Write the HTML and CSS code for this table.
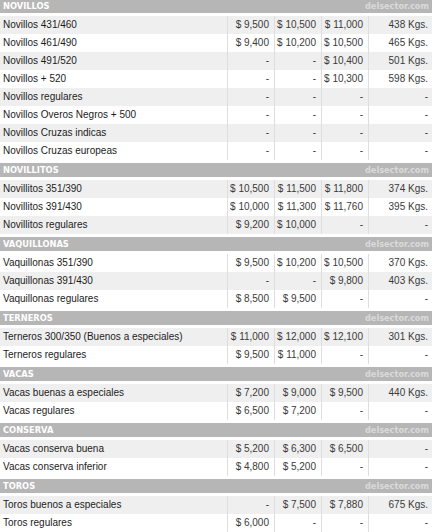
FILE: index.html
```html
<!DOCTYPE html>
<html>
<head>
<meta charset="utf-8">
<link rel="stylesheet" href="styles.css">
</head>
<body>
<div class="board">
  <div class="sec"><span class="sec-name">NOVILLOS</span><span class="brand">delsector.com</span></div>
  <div class="row g"><span class="lbl">Novillos 431/460</span><span class="n">$ 9,500</span><span class="n">$ 10,500</span><span class="n">$ 11,000</span><span class="n k">438 Kgs.</span></div>
  <div class="row"><span class="lbl">Novillos 461/490</span><span class="n">$ 9,400</span><span class="n">$ 10,200</span><span class="n">$ 10,500</span><span class="n k">465 Kgs.</span></div>
  <div class="row g"><span class="lbl">Novillos 491/520</span><span class="n">-</span><span class="n">-</span><span class="n">$ 10,400</span><span class="n k">501 Kgs.</span></div>
  <div class="row"><span class="lbl">Novillos + 520</span><span class="n">-</span><span class="n">-</span><span class="n">$ 10,300</span><span class="n k">598 Kgs.</span></div>
  <div class="row g"><span class="lbl">Novillos regulares</span><span class="n">-</span><span class="n">-</span><span class="n">-</span><span class="n k">-</span></div>
  <div class="row"><span class="lbl">Novillos Overos Negros + 500</span><span class="n">-</span><span class="n">-</span><span class="n">-</span><span class="n k">-</span></div>
  <div class="row g"><span class="lbl">Novillos Cruzas indicas</span><span class="n">-</span><span class="n">-</span><span class="n">-</span><span class="n k">-</span></div>
  <div class="row"><span class="lbl">Novillos Cruzas europeas</span><span class="n">-</span><span class="n">-</span><span class="n">-</span><span class="n k">-</span></div>

  <div class="sec"><span class="sec-name">NOVILLITOS</span><span class="brand">delsector.com</span></div>
  <div class="row g"><span class="lbl">Novillitos 351/390</span><span class="n">$ 10,500</span><span class="n">$ 11,500</span><span class="n">$ 11,800</span><span class="n k">374 Kgs.</span></div>
  <div class="row"><span class="lbl">Novillitos 391/430</span><span class="n">$ 10,000</span><span class="n">$ 11,300</span><span class="n">$ 11,760</span><span class="n k">395 Kgs.</span></div>
  <div class="row g"><span class="lbl">Novillitos regulares</span><span class="n">$ 9,200</span><span class="n">$ 10,000</span><span class="n">-</span><span class="n k">-</span></div>

  <div class="sec"><span class="sec-name">VAQUILLONAS</span><span class="brand">delsector.com</span></div>
  <div class="row"><span class="lbl">Vaquillonas 351/390</span><span class="n">$ 9,500</span><span class="n">$ 10,200</span><span class="n">$ 10,500</span><span class="n k">370 Kgs.</span></div>
  <div class="row g"><span class="lbl">Vaquillonas 391/430</span><span class="n">-</span><span class="n">-</span><span class="n">$ 9,800</span><span class="n k">403 Kgs.</span></div>
  <div class="row"><span class="lbl">Vaquillonas regulares</span><span class="n">$ 8,500</span><span class="n">$ 9,500</span><span class="n">-</span><span class="n k">-</span></div>

  <div class="sec"><span class="sec-name">TERNEROS</span><span class="brand">delsector.com</span></div>
  <div class="row g"><span class="lbl">Terneros 300/350 (Buenos a especiales)</span><span class="n">$ 11,000</span><span class="n">$ 12,000</span><span class="n">$ 12,100</span><span class="n k">301 Kgs.</span></div>
  <div class="row"><span class="lbl">Terneros regulares</span><span class="n">$ 9,500</span><span class="n">$ 11,000</span><span class="n">-</span><span class="n k">-</span></div>

  <div class="sec"><span class="sec-name">VACAS</span><span class="brand">delsector.com</span></div>
  <div class="row g"><span class="lbl">Vacas buenas a especiales</span><span class="n">$ 7,200</span><span class="n">$ 9,000</span><span class="n">$ 9,500</span><span class="n k">440 Kgs.</span></div>
  <div class="row"><span class="lbl">Vacas regulares</span><span class="n">$ 6,500</span><span class="n">$ 7,200</span><span class="n">-</span><span class="n k">-</span></div>

  <div class="sec"><span class="sec-name">CONSERVA</span><span class="brand">delsector.com</span></div>
  <div class="row g"><span class="lbl">Vacas conserva buena</span><span class="n">$ 5,200</span><span class="n">$ 6,300</span><span class="n">$ 6,500</span><span class="n k">-</span></div>
  <div class="row"><span class="lbl">Vacas conserva inferior</span><span class="n">$ 4,800</span><span class="n">$ 5,200</span><span class="n">-</span><span class="n k">-</span></div>

  <div class="sec"><span class="sec-name">TOROS</span><span class="brand">delsector.com</span></div>
  <div class="row g"><span class="lbl">Toros buenos a especiales</span><span class="n">-</span><span class="n">$ 7,500</span><span class="n">$ 7,880</span><span class="n k">675 Kgs.</span></div>
  <div class="row"><span class="lbl">Toros regulares</span><span class="n">$ 6,000</span><span class="n">-</span><span class="n">-</span><span class="n k">-</span></div>
</div>
</body>
</html>
```

FILE: styles.css
```css
html, body {
  margin: 0;
  padding: 0;
  background: #ffffff;
}

.board {
  width: 432px;
  margin-top: -1px;
  display: flex;
  flex-direction: column;
  font-family: "Liberation Sans", Arial, sans-serif;
  font-size: 10px;
}

.sec {
  height: 14px;
  margin: 3px 0;
  background: #b6b6b6;
  display: flex;
  align-items: center;
  justify-content: space-between;
  padding: 0 3px 0 3px;
  font-family: "DejaVu Sans", Verdana, sans-serif;
  font-weight: bold;
}

.sec:first-child {
  margin-top: 0;
}

.sec-name {
  color: #ffffff;
  font-size: 8.3px;
  line-height: 14px;
}

.brand {
  color: #dadada;
  font-size: 8.2px;
  line-height: 14px;
}

.row {
  display: grid;
  grid-template-columns: 227px 47px 47px 47px 64px;
  height: 18px;
  line-height: 18px;
  background: #ffffff;
}

.row.g {
  background: #efefef;
}

.lbl {
  padding-left: 3px;
  color: #1c1c1c;
  white-space: nowrap;
  overflow: hidden;
}

.n {
  border-left: 1px solid #dedede;
  text-align: right;
  padding-right: 5px;
  color: #3a3a3a;
  white-space: nowrap;
}

.n.k {
  padding-right: 4px;
}
```
